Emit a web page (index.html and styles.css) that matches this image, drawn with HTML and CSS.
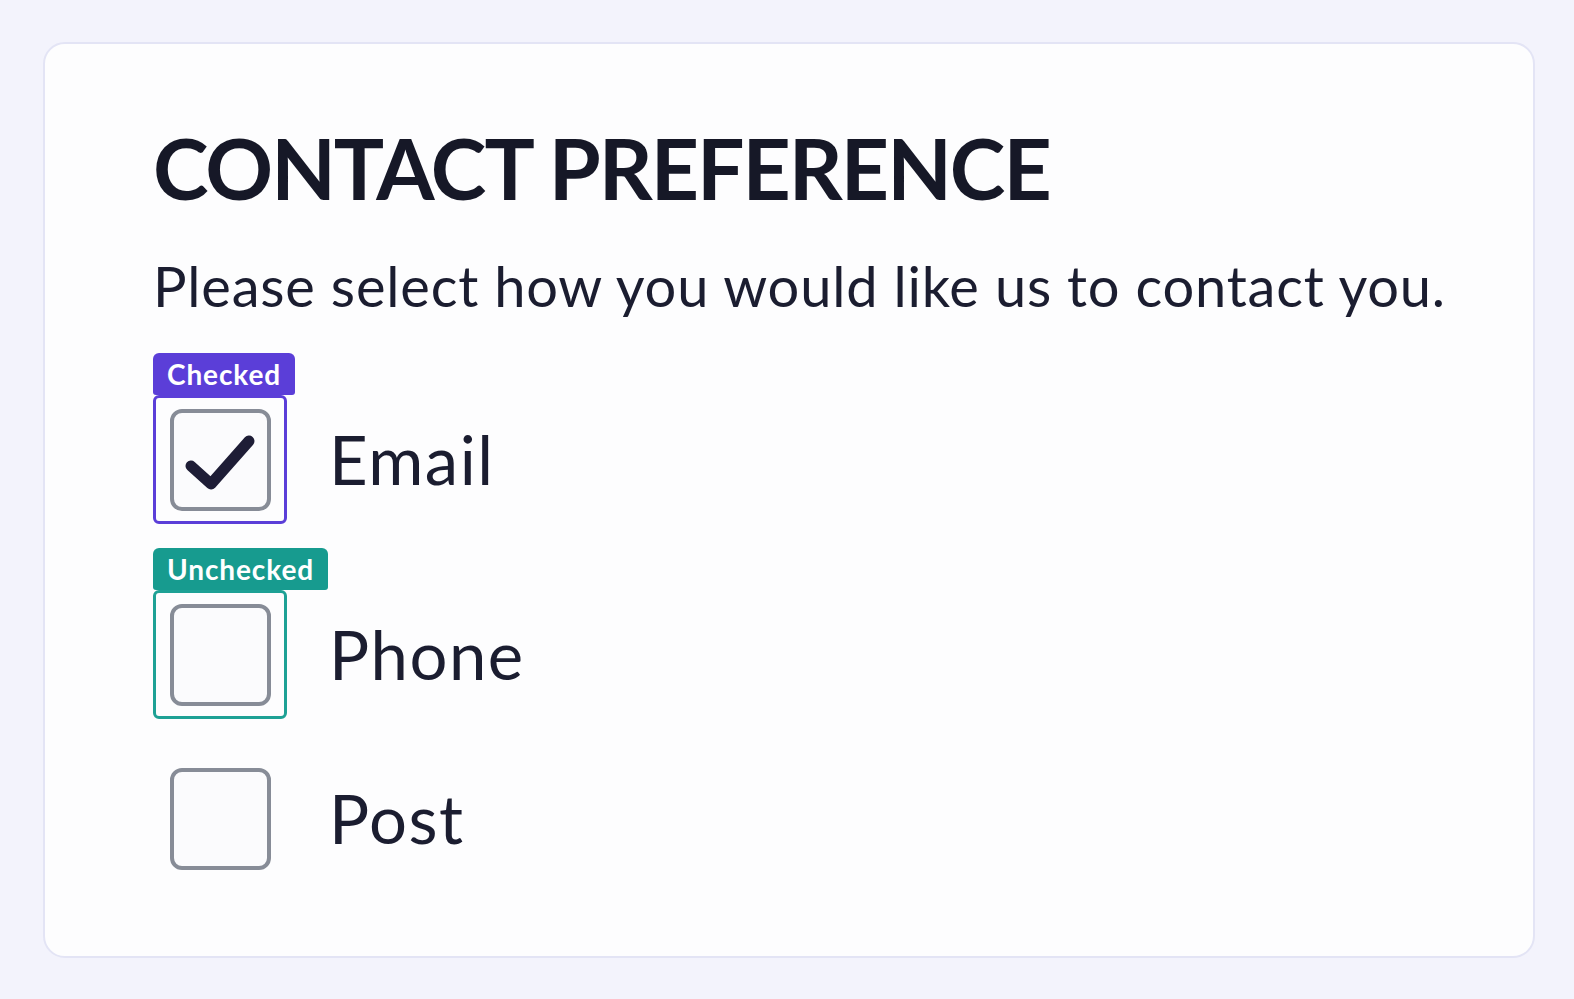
FILE: index.html
```html
<!DOCTYPE html>
<html lang="en">
<head>
    <meta charset="UTF-8">
    <meta name="viewport" content="width=device-width, initial-scale=1.0">
    <title>Contact Preference</title>
    <link rel="stylesheet" href="styles.css">
</head>
<body>
    <div class="card">
        <h1>CONTACT PREFERENCE</h1>
        <p class="lead">Please select how you would like us to contact you.</p>

        <div class="options">
            <div class="option checked">
                <span class="tag">Checked</span>
                <label class="row">
                    <span class="frame">
                        <span class="box">
                            <svg viewBox="0 0 100 100" width="100" height="100">
                                <path d="M21 57 L41 75 L79 32" fill="none" stroke="#1e1d36" stroke-width="11" stroke-linecap="round" stroke-linejoin="round"/>
                            </svg>
                        </span>
                    </span>
                    <span class="label">Email</span>
                </label>
            </div>

            <div class="option unchecked">
                <span class="tag">Unchecked</span>
                <label class="row">
                    <span class="frame">
                        <span class="box"></span>
                    </span>
                    <span class="label">Phone</span>
                </label>
            </div>

            <div class="option plain">
                <label class="row">
                    <span class="frame">
                        <span class="box"></span>
                    </span>
                    <span class="label">Post</span>
                </label>
            </div>
        </div>
    </div>
</body>
</html>
```

FILE: styles.css
```css
body {
    font-family: Lato, "Noto Sans", sans-serif;
    background-color: #f3f3fc;
    margin: 0;
    padding: 42px 0 0 43px;
    color: #1b1d30;
}

.card {
    box-sizing: border-box;
    width: 1492px;
    height: 916px;
    background: #fdfdfe;
    border: 2px solid #e3e4f5;
    border-radius: 22px;
    padding: 82px 0 0 108px;
}

.card h1 {
    font-size: 84px;
    font-weight: 700;
    line-height: 1;
    letter-spacing: -2px;
    margin: 0;
    color: #161827;
}

.lead {
    font-size: 56px;
    line-height: 1;
    letter-spacing: 0.8px;
    margin: 48px 0 0;
}

.options {
    display: flex;
    flex-direction: column;
    gap: 24px;
    margin-top: 39px;
}

.option {
    display: flex;
    flex-direction: column;
    align-items: flex-start;
}

.tag {
    color: #fff;
    font-size: 28px;
    font-weight: 700;
    letter-spacing: 0.9px;
    line-height: 42px;
    padding: 0 14px;
    border-radius: 6px 6px 3px 3px;
}

.checked .tag {
    background: #5b3ed8;
}

.unchecked .tag {
    background: #179b8f;
}

.row {
    display: flex;
    align-items: center;
    gap: 42px;
}

.frame {
    box-sizing: border-box;
    width: 134px;
    height: 129px;
    border: 3px solid transparent;
    border-radius: 6px;
    display: flex;
    justify-content: center;
    align-items: center;
}

.checked .frame {
    border-color: #5b3ed8;
}

.unchecked .frame {
    border-color: #1ea195;
}

.plain {
    margin-top: 11px;
}

.box {
    box-sizing: border-box;
    width: 101px;
    height: 102px;
    border: 4px solid #878c97;
    border-radius: 12px;
    background: #fbfbfd;
    position: relative;
}

.box svg {
    position: absolute;
    left: -4px;
    top: -4px;
}

.label {
    font-size: 67px;
    line-height: 1;
    letter-spacing: 1.5px;
}
```
